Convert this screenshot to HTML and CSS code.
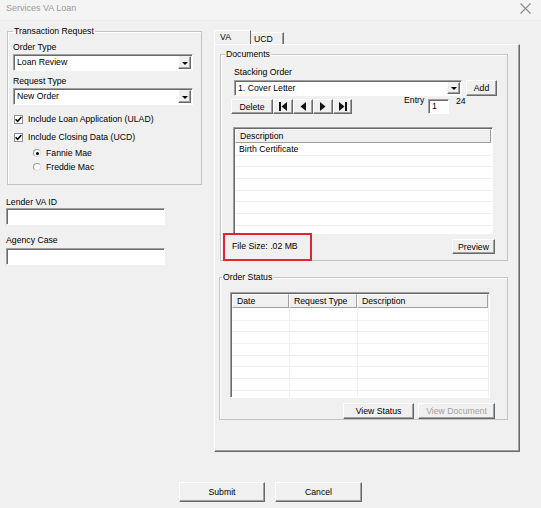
FILE: index.html
```html
<!DOCTYPE html>
<html lang="en">
<head>
  <meta charset="UTF-8" />
  <title>Services VA Loan</title>
  <link rel="stylesheet" href="styles.css">
</head>
<body>
  <!-- Title bar -->
  <div class="titlebar">
    <span class="title">Services VA Loan</span>
    <svg class="close" width="11" height="11" viewBox="0 0 11 11"><path d="M0.5 0.5 L10.5 10.5 M10.5 0.5 L0.5 10.5" stroke="#8c8c8c" stroke-width="1.1" fill="none"/></svg>
  </div>

  <div class="main">
    <!-- LEFT COLUMN -->
    <div class="left">
      <fieldset class="group tx">
        <legend>Transaction Request</legend>
        <div class="lbl">Order Type</div>
        <div class="combo wide"><span class="val">Loan Review</span><span class="drop"><i></i></span></div>
        <div class="lbl gap4">Request Type</div>
        <div class="combo wide"><span class="val">New Order</span><span class="drop"><i></i></span></div>
        <div class="check first"><span class="cb"><svg width="7" height="7" viewBox="0 0 7 7"><path d="M0.6 3.2 L2.6 5.3 L6.4 1" stroke="#000" stroke-width="1.5" fill="none"/></svg></span>Include Loan Application (ULAD)</div>
        <div class="check"><span class="cb"><svg width="7" height="7" viewBox="0 0 7 7"><path d="M0.6 3.2 L2.6 5.3 L6.4 1" stroke="#000" stroke-width="1.5" fill="none"/></svg></span>Include Closing Data (UCD)</div>
        <div class="radio first"><span class="rb on"></span>Fannie Mae</div>
        <div class="radio"><span class="rb"></span>Freddie Mac</div>
      </fieldset>

      <div class="lbl field-lbl">Lender VA ID</div>
      <div class="textbox field"></div>
      <div class="lbl field-lbl second">Agency Case</div>
      <div class="textbox field second"></div>
    </div>

    <!-- TAB CONTROL -->
    <div class="tabctl">
      <div class="tabs">
        <div class="tab active">VA</div>
        <div class="tab">UCD</div>
      </div>
      <div class="panel">
        <fieldset class="group docs">
          <legend>Documents</legend>
          <div class="lbl stack-lbl">Stacking Order</div>
          <div class="row stack-row">
            <div class="combo stack"><span class="val">1. Cover Letter</span><span class="drop"><i></i></span></div>
            <button class="btn add">Add</button>
          </div>
          <div class="row nav-row">
            <button class="btn del">Delete</button>
            <button class="btn nav"><svg width="8" height="9" viewBox="0 0 8 9"><rect x="0" y="0" width="2" height="9" fill="#111"/><path d="M8 0 L2.5 4.5 L8 9 Z" fill="#111"/></svg></button>
            <button class="btn nav"><svg width="6" height="9" viewBox="0 0 6 9"><path d="M6 0 L0.5 4.5 L6 9 Z" fill="#111"/></svg></button>
            <button class="btn nav"><svg width="6" height="9" viewBox="0 0 6 9"><path d="M0 0 L5.5 4.5 L0 9 Z" fill="#111"/></svg></button>
            <button class="btn nav last"><svg width="8" height="9" viewBox="0 0 8 9"><path d="M0 0 L5.5 4.5 L0 9 Z" fill="#111"/><rect x="6" y="0" width="2" height="9" fill="#111"/></svg></button>
            <span class="entry-lbl">Entry</span>
            <div class="textbox entry"><span class="val">1</span></div>
            <span class="count">24</span>
          </div>
          <div class="listview doclist">
            <div class="lv-head">
              <span class="hcell" style="width:256px">Description</span>
            </div>
            <div class="lv-body">
              <div class="lv-row">Birth Certificate</div>
            </div>
          </div>
          <div class="row size-row">
            <span class="filesize">File Size: .02 MB</span>
            <button class="btn preview">Preview</button>
          </div>
        </fieldset>

        <fieldset class="group status">
          <legend>Order Status</legend>
          <div class="listview statlist">
            <div class="lv-head">
              <span class="hcell" style="width:57px">Date</span>
              <span class="hcell" style="width:68px">Request Type</span>
              <span class="hcell" style="width:131px">Description</span>
            </div>
            <div class="lv-body cols"></div>
          </div>
          <div class="row stat-btns">
            <button class="btn vstatus">View Status</button>
            <button class="btn vdoc" disabled>View Document</button>
          </div>
        </fieldset>
      </div>
    </div>
  </div>

  <div class="footer">
    <button class="btn big">Submit</button>
    <button class="btn big cancel">Cancel</button>
  </div>
</body>
</html>
```

FILE: styles.css
```css
/* BASE */
* {
  box-sizing: border-box;
}
body {
  margin: 0;
  width: 541px;
  height: 508px;
  overflow: hidden;
  background: #f0f0f0;
  font-family: "Liberation Sans", Arial, sans-serif;
  font-size: 8.7px;
  color: #000;
}
button {
  font: inherit;
  color: inherit;
  padding: 0;
  margin: 0;
}

/* TITLE BAR */
.titlebar {
  height: 21px;
  background: #f4f4f4;
  border-bottom: 1px solid #ececec;
  display: flex;
  align-items: flex-start;
  justify-content: space-between;
  padding: 3px 10px 0 6px;
}
.title {
  color: #9a9a9a;
  font-size: 9px;
  line-height: 11px;
}

/* LAYOUT */
.main {
  display: flex;
  padding: 4px 0 0 7px;
}
.left {
  width: 195px;
}

/* GROUP BOXES */
.group {
  margin: 0;
  border: 1px solid #c4c4c4;
  box-shadow: 1px 1px 0 #fff inset;
  min-width: 0;
}
.group legend {
  padding: 0 1px;
  line-height: 12px;
}
.tx {
  width: 195px;
  padding: 4px 9px 10px 5px;
}
.lbl {
  line-height: 12px;
}
.gap4 {
  margin-top: 4px;
}

/* SUNKEN CONTROLS */
.combo, .textbox {
  display: flex;
  background: #fff;
  border: 1px solid;
  border-color: #a0a0a0 #fff #fff #a0a0a0;
  box-shadow: inset 1px 1px 0 #696969;
}
.combo {
  height: 17px;
  margin-top: 1px;
}
.combo.wide {
  width: 180px;
}
.combo .val, .textbox .val {
  flex: 1;
  padding-left: 3px;
  padding-top: 1px;
  line-height: 13px;
}
.drop {
  width: 13px;
  margin: 1px 1px 1px 0;
  background: #f0f0f0;
  border: 1px solid;
  border-color: #f0f0f0 #696969 #696969 #fff;
  box-shadow: inset -1px -1px 0 #a0a0a0;
  display: flex;
  align-items: center;
  justify-content: center;
}
.drop i {
  width: 0;
  height: 0;
  border-left: 3px solid transparent;
  border-right: 3px solid transparent;
  border-top: 3px solid #000;
  margin-top: 1px;
}

/* CHECKBOXES & RADIOS */
.check, .radio {
  display: flex;
  align-items: center;
  height: 14px;
}
.check.first {
  margin-top: 7px;
}
.check + .check {
  margin-top: 4px;
}
.radio {
  padding-left: 20px;
}
.radio.first {
  margin-top: 2px;
}
.cb {
  width: 9px;
  height: 9px;
  margin: 0 5px 0 1px;
  background: #fff;
  border: 1px solid #8e8e8e;
  display: flex;
  align-items: center;
  justify-content: center;
}
.rb {
  width: 8px;
  height: 8px;
  margin-right: 5px;
  border-radius: 50%;
  background: #fff;
  border: 1px solid #9a9a9a;
  border-right-color: #dcdcdc;
  border-bottom-color: #dcdcdc;
  position: relative;
}
.rb.on::after {
  content: "";
  position: absolute;
  left: 1.5px;
  top: 1.5px;
  width: 3px;
  height: 3px;
  border-radius: 50%;
  background: #000;
}

/* LEFT FIELDS */
.field-lbl {
  margin: 11px 0 0 -1px;
}
.field-lbl.second {
  margin-top: 9px;
}
.textbox.field {
  width: 159px;
  height: 17px;
  margin-left: -1px;
}
.textbox.field.second {
  margin-top: 2px;
}

/* TAB CONTROL */
.tabctl {
  margin-left: 12px;
  width: 306px;
}
.tabs {
  display: flex;
  align-items: flex-end;
  height: 14px;
  margin-top: 5px;
}
.tab {
  line-height: 12px;
  border-top: 1px solid #fff;
  border-right: 1px solid #696969;
}
.tab.active {
  width: 37px;
  height: 14px;
  border-left: 1px solid #fff;
  padding-left: 5px;
}
.tab:not(.active) {
  width: 33px;
  height: 12px;
  padding-left: 3px;
  box-shadow: inset -1px 0 0 #a0a0a0;
}
.panel {
  height: 408px;
  border-top: 1px solid #fff;
  border-left: 1px solid #fff;
  border-right: 1px solid #696969;
  border-bottom: 1px solid #696969;
  box-shadow: inset -1px -1px 0 #a0a0a0;
  padding: 3px 0 0 5px;
}

/* RAISED BUTTONS */
.btn {
  background: #f0f0f0;
  border: 1px solid;
  border-color: #fff #696969 #696969 #fff;
  box-shadow: inset -1px -1px 0 #a0a0a0;
  line-height: 12px;
  text-align: center;
  cursor: pointer;
}
.btn:disabled {
  color: #a0a0a0;
  cursor: default;
}

/* DOCUMENTS GROUP */
.docs {
  width: 288px;
  padding: 0 12px 6px 4px;
}
.row {
  display: flex;
}
.row > * {
  flex-shrink: 0;
}
.stack-lbl {
  margin: 6px 0 0 9px;
}
.stack-row {
  margin-top: 1px;
}
.combo.stack {
  width: 228px;
  height: 16px;
  margin-left: 9px;
}
.combo.stack .val {
  line-height: 12px;
}
.add {
  width: 31px;
  height: 16px;
  margin-left: 4px;
  margin-top: 1px;
}
.nav-row {
  margin-top: 3px;
  height: 15px;
}
.del {
  width: 42px;
  height: 15px;
  margin-left: 6px;
}
.nav {
  width: 20px;
  height: 15px;
  display: flex;
  align-items: center;
  justify-content: center;
}
.nav.last {
  width: 19px;
}
.entry-lbl {
  width: 24px;
  margin: -5px 0 0 52px;
  line-height: 12px;
}
.textbox.entry {
  width: 21px;
  height: 15px;
}
.textbox.entry .val {
  line-height: 11px;
}
.count {
  margin: -4px 0 0 7px;
  line-height: 12px;
}

/* LIST VIEWS */
.listview {
  background: #fff;
  border: 1px solid;
  border-color: #a0a0a0 #fff #fff #a0a0a0;
  box-shadow: inset 1px 1px 0 #696969;
  padding: 1px 0 0 1px;
  display: flex;
  flex-direction: column;
}
.lv-head {
  display: flex;
  height: 14px;
  background: #f0f0f0;
}
.hcell {
  height: 14px;
  padding-left: 4px;
  line-height: 13px;
  border-top: 1px solid #fff;
  border-left: 1px solid #fff;
  border-right: 1px solid #a0a0a0;
  border-bottom: 1px solid #a0a0a0;
  white-space: nowrap;
}
.lv-body {
  flex: 1;
  background: repeating-linear-gradient(#fff 0, #fff 10.67px, #efefef 10.67px, #efefef 11.67px);
  background-position: 0 1px;
}
.lv-row {
  padding-left: 4px;
  line-height: 12px;
}
.doclist {
  width: 260px;
  height: 107px;
  margin: 13px 0 0 8px;
}
.size-row {
  margin-top: 5px;
  height: 15px;
  align-items: center;
}
.filesize {
  position: relative;
  margin-left: 7px;
  line-height: 15px;
}
/* red highlight drawn over the label */
.filesize::after {
  content: "";
  position: absolute;
  left: -9px;
  top: -6px;
  width: 85px;
  height: 24px;
  border: 2px solid #e3262b;
}
.preview {
  width: 43px;
  height: 15px;
  margin-left: auto;
}

/* ORDER STATUS GROUP */
.status {
  width: 289px;
  margin: 10px 0 0 -1px;
  padding: 0 12px 0 2px;
}
.statlist {
  width: 260px;
  height: 106px;
  margin: 9px 0 0 8px;
}
.lv-body.cols {
  background:
    linear-gradient(#efefef, #efefef) 57px 0 / 1px 100% no-repeat,
    linear-gradient(#efefef, #efefef) 125px 0 / 1px 100% no-repeat,
    linear-gradient(#efefef, #efefef) 256px 0 / 1px 100% no-repeat,
    repeating-linear-gradient(#fff 0, #fff 10.67px, #efefef 10.67px, #efefef 11.67px) 0 1px;
}
.stat-btns {
  justify-content: flex-end;
  margin-top: 5px;
  gap: 4px;
}
.vstatus {
  width: 71px;
  height: 16px;
}
.vdoc {
  width: 77px;
  height: 16px;
}

/* FOOTER */
.footer {
  display: flex;
  justify-content: center;
  gap: 10px;
  margin-top: 30px;
}
.btn.big {
  width: 86px;
  height: 20px;
}
.btn.big.cancel {
  width: 87px;
}
```
